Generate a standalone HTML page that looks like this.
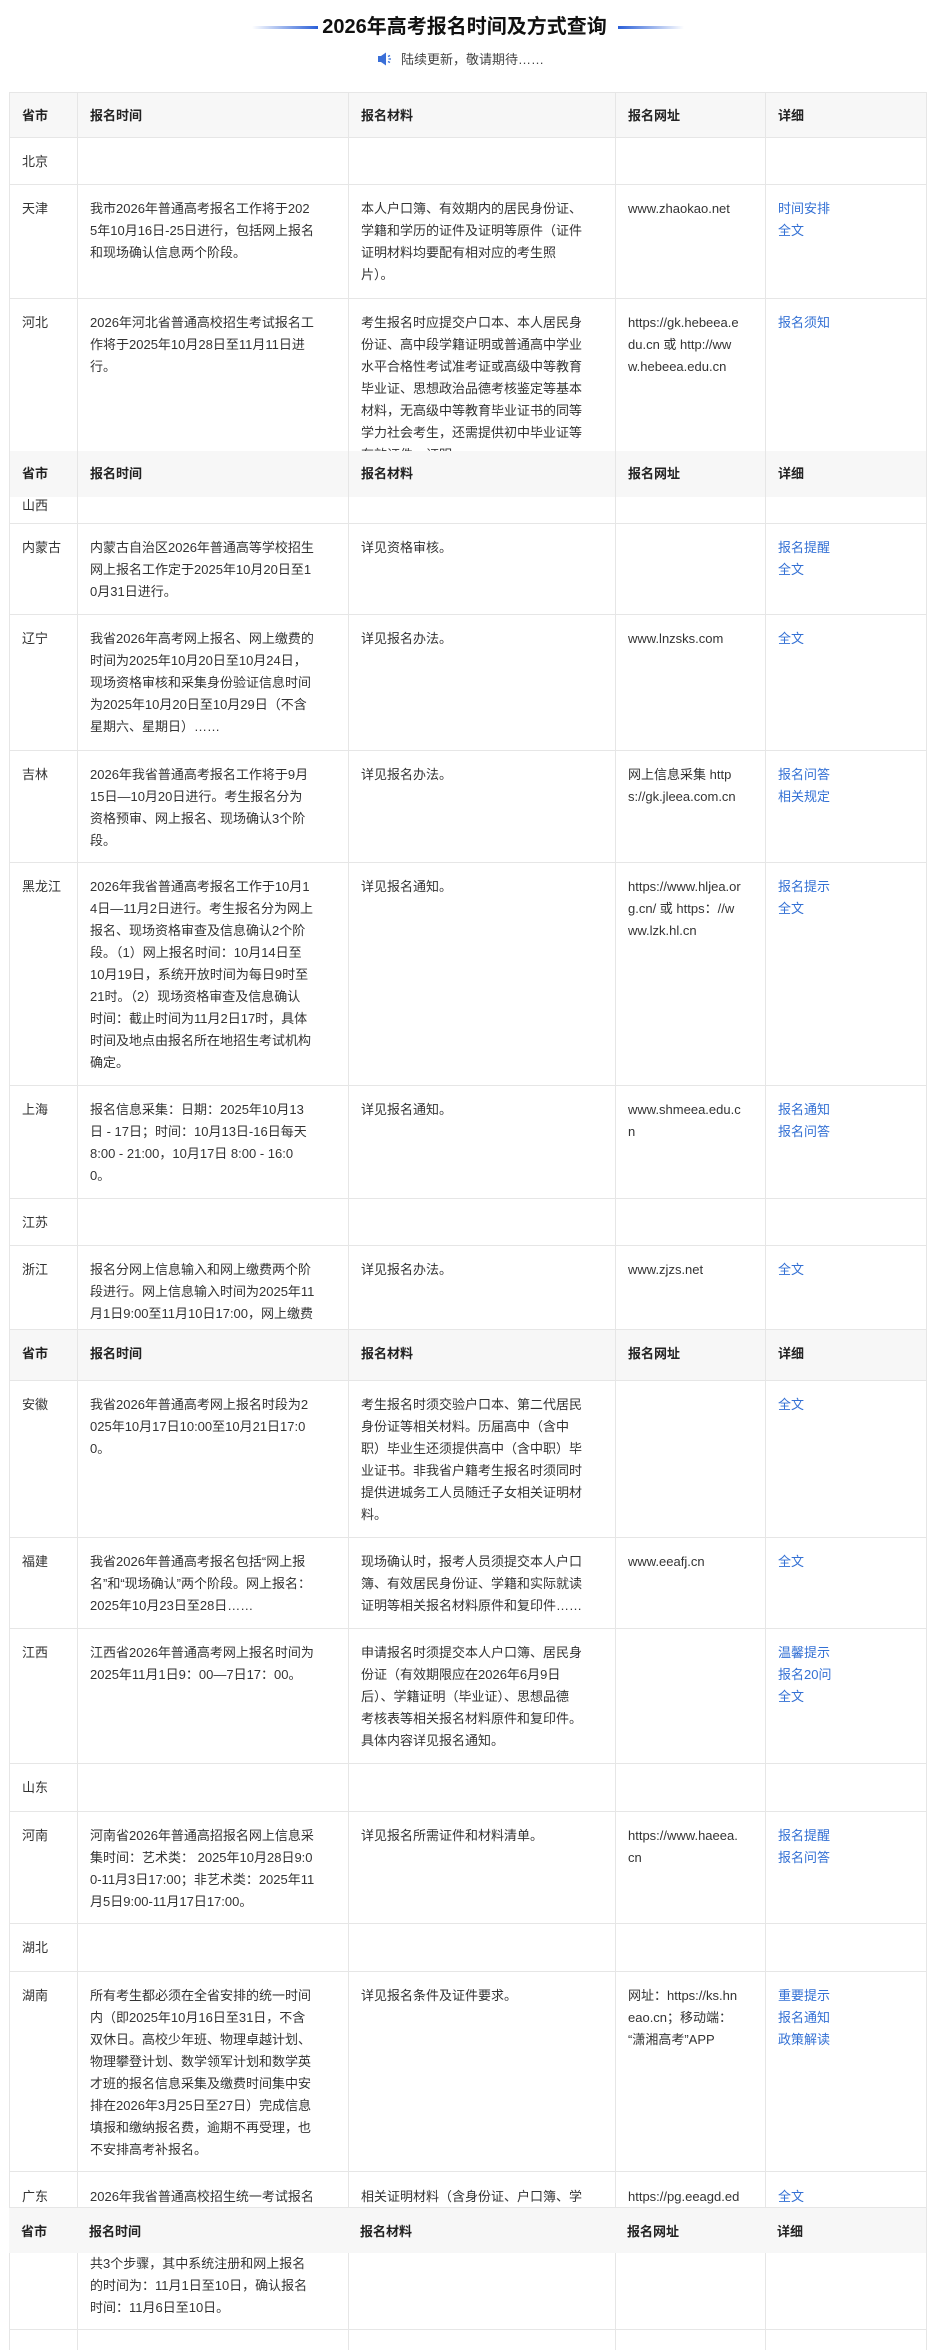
<!DOCTYPE html>
<html><head><meta charset="utf-8">
<style>
*{margin:0;padding:0;box-sizing:border-box}
body{width:929px;height:2338px;background:#fff;font-family:"Liberation Sans","Noto Sans CJK SC",sans-serif;color:#333;font-size:13px;line-height:22px;position:relative;overflow:hidden}
.r{position:absolute;left:9px;width:918px;overflow:hidden;border-bottom:1px solid #e6e6e6;border-right:1px solid #e6e6e6;background:#fff}
.c{position:absolute;top:0;bottom:0;padding:13px 0 0 12px;border-left:1px solid #e6e6e6;white-space:nowrap}
.a{left:0;width:68px}.b{left:68px;width:271px}.d{left:339px;width:267px}.e{left:606px;width:150px}.f{left:756px;width:162px}
.h{background:#f7f7f7;font-weight:bold;color:#222}
.h .c{padding-top:12px}
a{color:#3370d4;text-decoration:none}
.t{position:absolute;top:12px;left:0;width:929px;text-align:center;font-size:20px;font-weight:bold;line-height:30px;color:#111}
.ln{position:absolute;top:26px;height:3px;width:66px}
.sub{position:absolute;top:49px;left:377px;font-size:13px;line-height:22px;color:#444;white-space:nowrap}
</style></head><body>
<div class="ln" style="left:252px;background:linear-gradient(90deg,rgba(42,95,216,0),#2a5fd8)"></div>
<div class="t">2026年高考报名时间及方式查询</div>
<div class="ln" style="left:618px;background:linear-gradient(90deg,#2a5fd8,rgba(42,95,216,0))"></div>
<div class="sub"><svg width="16" height="14" viewBox="0 0 16 14" style="vertical-align:-2px;margin-right:8px"><path d="M1 4h3l5-3.5v13L4 10H1z" fill="#3a6fd8"/><path d="M11 4.5l2-1M11.5 7h2.5M11 9.5l2 1" stroke="#3a6fd8" stroke-width="1.3"/></svg>陆续更新，敬请期待……</div>

<div class="r h" style="top:92px;height:46px;border-top:1px solid #e6e6e6"><div class="c a">省市</div><div class="c b">报名时间</div><div class="c d">报名材料</div><div class="c e">报名网址</div><div class="c f">详细</div></div>

<div class="r" style="top:138px;height:47px"><div class="c a">北京</div><div class="c b"></div><div class="c d"></div><div class="c e"></div><div class="c f"></div></div>

<div class="r" style="top:185px;height:114px"><div class="c a">天津</div><div class="c b">我市2026年普通高考报名工作将于202<br>5年10月16日-25日进行，包括网上报名<br>和现场确认信息两个阶段。</div><div class="c d">本人户口簿、有效期内的居民身份证、<br>学籍和学历的证件及证明等原件（证件<br>证明材料均要配有相对应的考生照<br>片）。</div><div class="c e">www.zhaokao.net</div><div class="c f"><a>时间安排</a><br><a>全文</a></div></div>

<div class="r" style="top:299px;height:180px;border-bottom:none"><div class="c a">河北</div><div class="c b">2026年河北省普通高校招生考试报名工<br>作将于2025年10月28日至11月11日进<br>行。</div><div class="c d">考生报名时应提交户口本、本人居民身<br>份证、高中段学籍证明或普通高中学业<br>水平合格性考试准考证或高级中等教育<br>毕业证、思想政治品德考核鉴定等基本<br>材料，无高级中等教育毕业证书的同等<br>学力社会考生，还需提供初中毕业证等<br>有效证件、证明。</div><div class="c e">https://gk.hebeea.e<br>du.cn 或 http://ww<br>w.hebeea.edu.cn</div><div class="c f"><a>报名须知</a></div></div>

<div class="r h" style="top:451px;height:46px;border-bottom:none;background:#f7f7f7"><div class="c a">省市</div><div class="c b">报名时间</div><div class="c d">报名材料</div><div class="c e">报名网址</div><div class="c f">详细</div></div>
<div class="r" style="top:497px;height:27px"><div class="c a" style="padding-top:0;line-height:18px">山西</div><div class="c b"></div><div class="c d"></div><div class="c e"></div><div class="c f"></div></div>

<div class="r" style="top:524px;height:91px"><div class="c a">内蒙古</div><div class="c b">内蒙古自治区2026年普通高等学校招生<br>网上报名工作定于2025年10月20日至1<br>0月31日进行。</div><div class="c d">详见资格审核。</div><div class="c e"></div><div class="c f"><a>报名提醒</a><br><a>全文</a></div></div>

<div class="r" style="top:615px;height:136px"><div class="c a">辽宁</div><div class="c b">我省2026年高考网上报名、网上缴费的<br>时间为2025年10月20日至10月24日，<br>现场资格审核和采集身份验证信息时间<br>为2025年10月20日至10月29日（不含<br>星期六、星期日）……</div><div class="c d">详见报名办法。</div><div class="c e">www.lnzsks.com</div><div class="c f"><a>全文</a></div></div>

<div class="r" style="top:751px;height:112px"><div class="c a">吉林</div><div class="c b">2026年我省普通高考报名工作将于9月<br>15日—10月20日进行。考生报名分为<br>资格预审、网上报名、现场确认3个阶<br>段。</div><div class="c d">详见报名办法。</div><div class="c e">网上信息采集 http<br>s://gk.jleea.com.cn</div><div class="c f"><a>报名问答</a><br><a>相关规定</a></div></div>

<div class="r" style="top:863px;height:223px"><div class="c a">黑龙江</div><div class="c b">2026年我省普通高考报名工作于10月1<br>4日—11月2日进行。考生报名分为网上<br>报名、现场资格审查及信息确认2个阶<br>段。（1）网上报名时间：10月14日至<br>10月19日，系统开放时间为每日9时至<br>21时。（2）现场资格审查及信息确认<br>时间：截止时间为11月2日17时，具体<br>时间及地点由报名所在地招生考试机构<br>确定。</div><div class="c d">详见报名通知。</div><div class="c e">https://www.hljea.or<br>g.cn/ 或 https：//w<br>ww.lzk.hl.cn</div><div class="c f"><a>报名提示</a><br><a>全文</a></div></div>

<div class="r" style="top:1086px;height:113px"><div class="c a">上海</div><div class="c b">报名信息采集：日期：2025年10月13<br>日 - 17日；时间：10月13日-16日每天<br>8:00 - 21:00，10月17日 8:00 - 16:0<br>0。</div><div class="c d">详见报名通知。</div><div class="c e">www.shmeea.edu.c<br>n</div><div class="c f"><a>报名通知</a><br><a>报名问答</a></div></div>

<div class="r" style="top:1199px;height:47px"><div class="c a">江苏</div><div class="c b"></div><div class="c d"></div><div class="c e"></div><div class="c f"></div></div>

<div class="r" style="top:1246px;height:83px;border-bottom:none"><div class="c a">浙江</div><div class="c b">报名分网上信息输入和网上缴费两个阶<br>段进行。网上信息输入时间为2025年11<br>月1日9:00至11月10日17:00，网上缴费</div><div class="c d">详见报名办法。</div><div class="c e">www.zjzs.net</div><div class="c f"><a>全文</a></div></div>
<div class="r h" style="top:1329px;height:52px;border-top:1px solid #e6e6e6"><div class="c a" style="padding-top:13px">省市</div><div class="c b" style="padding-top:13px">报名时间</div><div class="c d" style="padding-top:13px">报名材料</div><div class="c e" style="padding-top:13px">报名网址</div><div class="c f" style="padding-top:13px">详细</div></div>

<div class="r" style="top:1381px;height:157px"><div class="c a">安徽</div><div class="c b">我省2026年普通高考网上报名时段为2<br>025年10月17日10:00至10月21日17:0<br>0。</div><div class="c d">考生报名时须交验户口本、第二代居民<br>身份证等相关材料。历届高中（含中<br>职）毕业生还须提供高中（含中职）毕<br>业证书。非我省户籍考生报名时须同时<br>提供进城务工人员随迁子女相关证明材<br>料。</div><div class="c e"></div><div class="c f"><a>全文</a></div></div>

<div class="r" style="top:1538px;height:91px"><div class="c a">福建</div><div class="c b">我省2026年普通高考报名包括“网上报<br>名”和“现场确认”两个阶段。网上报名：<br>2025年10月23日至28日……</div><div class="c d">现场确认时，报考人员须提交本人户口<br>簿、有效居民身份证、学籍和实际就读<br>证明等相关报名材料原件和复印件……</div><div class="c e">www.eeafj.cn</div><div class="c f"><a>全文</a></div></div>

<div class="r" style="top:1629px;height:135px"><div class="c a">江西</div><div class="c b">江西省2026年普通高考网上报名时间为<br>2025年11月1日9：00—7日17：00。</div><div class="c d">申请报名时须提交本人户口簿、居民身<br>份证（有效期限应在2026年6月9日<br>后）、学籍证明（毕业证）、思想品德<br>考核表等相关报名材料原件和复印件。<br>具体内容详见报名通知。</div><div class="c e"></div><div class="c f"><a>温馨提示</a><br><a>报名20问</a><br><a>全文</a></div></div>

<div class="r" style="top:1764px;height:48px"><div class="c a">山东</div><div class="c b"></div><div class="c d"></div><div class="c e"></div><div class="c f"></div></div>

<div class="r" style="top:1812px;height:112px"><div class="c a">河南</div><div class="c b">河南省2026年普通高招报名网上信息采<br>集时间：艺术类： 2025年10月28日9:0<br>0-11月3日17:00；非艺术类：2025年11<br>月5日9:00-11月17日17:00。</div><div class="c d">详见报名所需证件和材料清单。</div><div class="c e">https://www.haeea.<br>cn</div><div class="c f"><a>报名提醒</a><br><a>报名问答</a></div></div>

<div class="r" style="top:1924px;height:48px"><div class="c a">湖北</div><div class="c b"></div><div class="c d"></div><div class="c e"></div><div class="c f"></div></div>

<div class="r" style="top:1972px;height:200px"><div class="c a">湖南</div><div class="c b">所有考生都必须在全省安排的统一时间<br>内（即2025年10月16日至31日，不含<br>双休日。高校少年班、物理卓越计划、<br>物理攀登计划、数学领军计划和数学英<br>才班的报名信息采集及缴费时间集中安<br>排在2026年3月25日至27日）完成信息<br>填报和缴纳报名费，逾期不再受理，也<br>不安排高考补报名。</div><div class="c d">详见报名条件及证件要求。</div><div class="c e">网址：https://ks.hn<br>eao.cn；移动端：<br>“潇湘高考”APP</div><div class="c f"><a>重要提示</a><br><a>报名通知</a><br><a>政策解读</a></div></div>

<div class="r" style="top:2172px;height:36px;border-bottom:none"><div class="c a" style="padding-top:14px">广东</div><div class="c b" style="padding-top:14px">2026年我省普通高校招生统一考试报名</div><div class="c d" style="padding-top:14px">相关证明材料（含身份证、户口簿、学</div><div class="c e" style="padding-top:14px">https://pg.eeagd.ed</div><div class="c f" style="padding-top:14px"><a>全文</a></div></div>
<div class="r h" style="top:2207px;height:46px;border-bottom:none;border-top:1px solid #e6e6e6"><div class="c a" style="padding-top:13px;border-left:none">省市</div><div class="c b" style="padding-top:13px;border-left:none">报名时间</div><div class="c d" style="padding-top:13px;border-left:none">报名材料</div><div class="c e" style="padding-top:13px;border-left:none">报名网址</div><div class="c f" style="padding-top:13px;border-left:none">详细</div></div>
<div class="r" style="top:2253px;height:77px"><div class="c a" style="padding-top:0"></div><div class="c b" style="padding-top:0">共3个步骤，其中系统注册和网上报名<br>的时间为：11月1日至10日，确认报名<br>时间：11月6日至10日。</div><div class="c d"></div><div class="c e"></div><div class="c f"></div></div>
<div class="r" style="top:2330px;height:20px;border-bottom:none"><div class="c a"></div><div class="c b"></div><div class="c d"></div><div class="c e"></div><div class="c f"></div></div>
</body></html>
